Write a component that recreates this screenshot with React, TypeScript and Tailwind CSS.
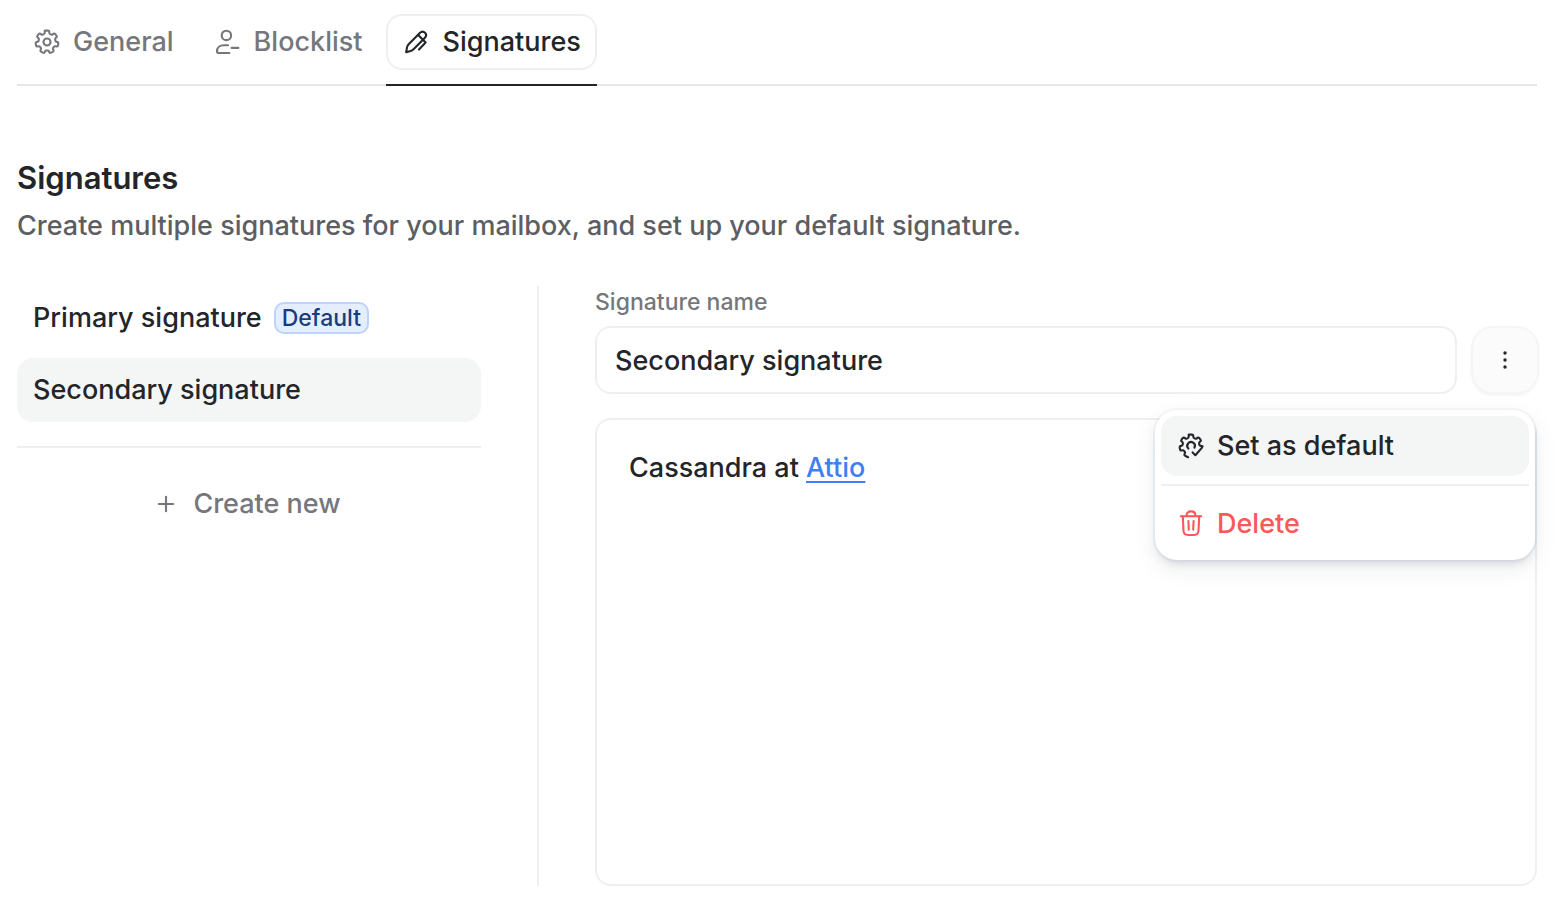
import type { ReactNode } from "react";

const TEETH = 7;

/** Points of a cog outline, in degrees clockwise from the top, as an open or closed path. */
function cogPath(fromDeg: number, toDeg: number): string {
  const step = 360 / TEETH;
  const corners: Array<[number, number]> = [];
  for (let i = 0; i <= TEETH; i++) {
    const a = i * step;
    corners.push([a - 16, 8.6], [a - 11, 11.6], [a + 11, 11.6], [a + 16, 8.6]);
  }
  const pts = corners
    .filter(([a]) => a >= fromDeg && a <= toDeg)
    .map(([a, r]) => {
      const t = (a * Math.PI) / 180;
      return [14 + r * Math.sin(t), 14 - r * Math.cos(t)];
    });
  const mids = pts.slice(1).map((p, i) => [(p[0] + pts[i][0]) / 2, (p[1] + pts[i][1]) / 2]);
  let d = `M${pts[0][0].toFixed(2)} ${pts[0][1].toFixed(2)}`;
  mids.forEach((m, i) => {
    const p = pts[i];
    const f = 0.6;
    const ax = p[0] + (m[0] - p[0]) * f;
    const ay = p[1] + (m[1] - p[1]) * f;
    d += i === 0 ? `L${m[0].toFixed(2)} ${m[1].toFixed(2)}` : `Q${p[0].toFixed(2)} ${p[1].toFixed(2)} ${ax.toFixed(2)} ${ay.toFixed(2)}`;
    const n = pts[i + 1];
    const bx = n[0] - (n[0] - m[0]) * f;
    const by = n[1] - (n[1] - m[1]) * f;
    d += `L${bx.toFixed(2)} ${by.toFixed(2)}`;
  });
  const last = pts[pts.length - 1];
  return `${d}L${last[0].toFixed(2)} ${last[1].toFixed(2)}`;
}

function Icon({ children }: { children: ReactNode }) {
  return (
    <svg
      viewBox="0 0 28 28"
      className="size-7 shrink-0"
      fill="none"
      stroke="currentColor"
      strokeWidth="2.1"
      strokeLinecap="round"
      strokeLinejoin="round"
      aria-hidden="true"
    >
      {children}
    </svg>
  );
}

const GearIcon = () => (
  <Icon>
    <path d={cogPath(-12, 350)} />
    <circle cx="14" cy="14" r="3.5" />
  </Icon>
);

const GearCheckIcon = () => (
  <Icon>
    <path d={cogPath(-12, 92) + cogPath(192, 350)} />
    <path d="M11.4 16.6A3.8 3.8 0 1 1 17.4 15.7" />
    <path d="M15.6 20.4 18.4 23.2 25 15.6" />
  </Icon>
);

const UserMinusIcon = () => (
  <Icon>
    <circle cx="12.4" cy="7.4" r="4.7" />
    <path d="M14 17.2H9.6C5.6 17.2 3 19.8 3 23.2 3 24.5 3.8 25 5 25H15.4" />
    <path d="M17.6 19.9H24.4" />
  </Icon>
);

const PenIcon = () => (
  <Icon>
    <path d="M4.2 24.2 5 19.4C5.3 18 5.9 17 6.9 16L17.8 5C19.4 3.4 21.6 3.3 23 4.7 24.4 6.1 24.3 8.3 22.7 9.9L11.8 20.9C10.8 21.9 9.8 22.7 8.5 23.1Z" />
    <path d="M16.2 7 21.2 12 23.6 14.5 17 21.4" />
  </Icon>
);

const TrashIcon = () => (
  <Icon>
    <path d="M3.8 6.2H24.2" />
    <path d="M9.6 6V5.4C9.6 3 11.2 1.4 14 1.4S18.4 3 18.4 5.4V6" />
    <path d="M5.8 6.4 6.5 20.8C6.7 23.6 8.2 25 11 25H17C19.8 25 21.3 23.6 21.5 20.8L22.2 6.4" />
    <path d="M11.4 11 11.8 19.6M16.6 11 16.2 19.6" />
  </Icon>
);

const PlusIcon = () => (
  <Icon>
    <path d="M13 6.8V21.2M5.8 14H20.2" />
  </Icon>
);

const DotsIcon = () => (
  <Icon>
    <g fill="currentColor" stroke="none">
      <circle cx="14" cy="7" r="1.7" />
      <circle cx="14" cy="14" r="1.7" />
      <circle cx="14" cy="21" r="1.7" />
    </g>
  </Icon>
);

function Tab({ icon, label, active = false }: { icon: ReactNode; label: string; active?: boolean }) {
  return (
    <button
      type="button"
      role="tab"
      aria-selected={active}
      className={
        active
          ? "-mb-[2px] border-b-2 border-[#232529] pb-3.5 text-[#232529]"
          : "-mb-[2px] border-b-2 border-transparent pb-3.5 text-[#75777c]"
      }
    >
      <span
        className={
          active
            ? "flex h-14 items-center gap-3 rounded-2xl border-2 border-[#eeeff1] px-3.5"
            : "flex h-14 items-center gap-3 rounded-2xl border-2 border-transparent px-3.5"
        }
      >
        {icon}
        {label}
      </span>
    </button>
  );
}

export default function App() {
  return (
    <main className="min-h-screen bg-white pt-3.5 pr-[23px] pb-5 pl-[17px] font-['Inter',sans-serif] text-[27px] leading-10 font-medium text-[#232529]">
      <div role="tablist" className="flex gap-2 border-b-2 border-[#e6e7ea]">
        <Tab icon={<GearIcon />} label="General" />
        <Tab icon={<UserMinusIcon />} label="Blocklist" />
        <Tab icon={<PenIcon />} label="Signatures" active />
      </div>

      <header className="pt-[72px]">
        <h1 className="text-[31px] leading-10 font-semibold">Signatures</h1>
        <p className="pt-2 text-[#5c5e63]">
          Create multiple signatures for your mailbox, and set up your default signature.
        </p>
      </header>

      <div className="flex pt-10">
        <aside className="w-[522px] shrink-0 border-r-2 border-[#eeeff1] pr-14">
          <nav aria-label="Signatures" className="flex flex-col gap-2 border-b-2 border-[#eeeff1] pb-6">
            <button type="button" className="flex h-16 items-center gap-3 rounded-2xl px-4">
              Primary signature
              <span className="flex h-8 items-center rounded-[10px] border-2 border-[#bdd3ff] bg-[#e5eeff] px-1.5 text-[23px] text-[#183c81]">
                Default
              </span>
            </button>
            <button type="button" aria-current="true" className="flex h-16 items-center rounded-2xl bg-[#f4f5f5] px-4">
              Secondary signature
            </button>
          </nav>
          <button type="button" className="mt-6 flex h-16 w-full items-center justify-center gap-3 pr-1 text-[#75777c]">
            <PlusIcon />
            Create new
          </button>
        </aside>

        <section className="min-w-0 flex-1 pl-14">
          <label htmlFor="signature-name" className="block text-[23px] leading-8 text-[#75777c]">
            Signature name
          </label>
          <div className="flex items-center gap-4 pt-2">
            <input
              id="signature-name"
              type="text"
              defaultValue="Secondary signature"
              className="h-[68px] min-w-0 flex-1 rounded-2xl border-2 border-[#eeeff1] px-[18px] outline-none"
            />
            <div className="relative">
              <button
                type="button"
                aria-label="Signature actions"
                aria-haspopup="menu"
                aria-expanded="true"
                className="flex size-16 items-center justify-center rounded-[20px] bg-[#fbfbfb] shadow-[0_0_0_2px_#f4f5f6,0_2px_4px_0_rgba(28,40,64,0.1)]"
              >
                <DotsIcon />
              </button>
              <div
                role="menu"
                className="absolute top-full right-0.5 z-10 mt-[18px] w-[380px] rounded-[22px] bg-white p-1.5 shadow-[0_0_0_2px_rgba(28,40,64,0.04),0_6px_8px_-2px_rgba(28,40,64,0.12),0_8px_24px_0_rgba(28,40,64,0.08)]"
              >
                <button type="button" role="menuitem" className="flex h-[60px] w-full items-center gap-3 rounded-2xl bg-[#f4f5f5] px-4">
                  <GearCheckIcon />
                  Set as default
                </button>
                <hr className="my-2 border-t-2 border-[#eeeff1]" />
                <button type="button" role="menuitem" className="flex h-[60px] w-full items-center gap-3 rounded-2xl px-4 text-[#fa5858]">
                  <TrashIcon />
                  Delete
                </button>
              </div>
            </div>
          </div>
          <div
            role="textbox"
            aria-multiline="true"
            aria-label="Signature content"
            className="mt-6 min-h-[468px] rounded-2xl border-2 border-[#eeeff1] px-8 py-7"
          >
            Cassandra at{" "}
            <a href="#attio" className="text-[#407ff2] underline decoration-2 underline-offset-4">
              Attio
            </a>
          </div>
        </section>
      </div>
    </main>
  );
}
